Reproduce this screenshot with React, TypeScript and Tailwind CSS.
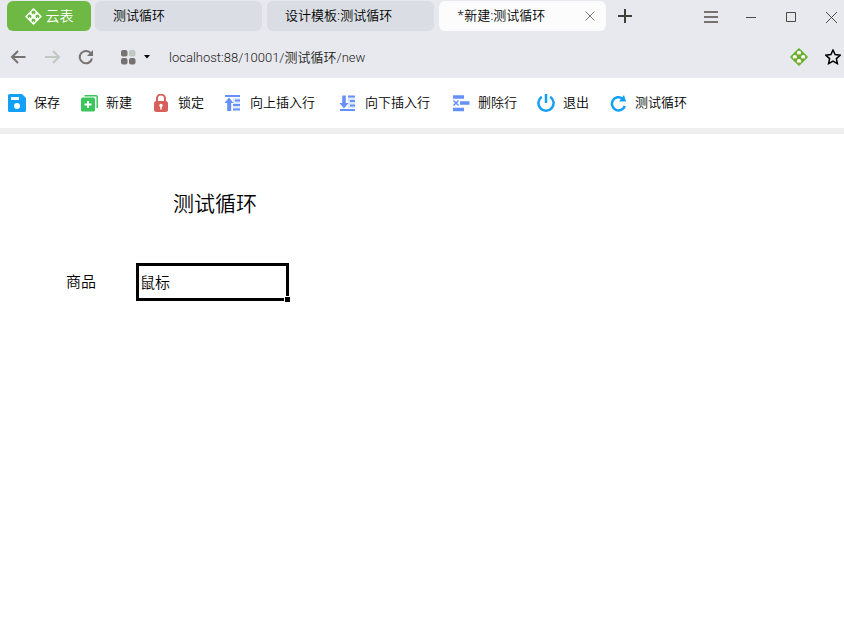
import type { ReactNode } from "react";

type LogoProps = {
  size: number;
  className: string;
  hole: string;
  seed: string;
};

const Logo = ({ size, className, hole, seed }: LogoProps) => (
  <svg width={size} height={size} viewBox="0 0 18 18" className={className} aria-hidden="true">
    <path
      d="M9 1.2 16.8 9 9 16.8 1.2 9Z"
      fill="currentColor"
      stroke="currentColor"
      strokeWidth="1.8"
      strokeLinejoin="round"
    />
    <g fill={hole}>
      <circle cx="9" cy="4.8" r="2.1" />
      <circle cx="9" cy="13.2" r="2.1" />
      <circle cx="4.8" cy="9" r="2.1" />
      <circle cx="13.2" cy="9" r="2.1" />
    </g>
    <g fill={seed}>
      <path d="M8.4 5.8h1.2V7H8.400ZM8.400 14h1.200v1.200H8.400ZM4.200 9.800h1.200V11H4.200ZM12.600 9.800h1.200V11h-1.200Z" />
    </g>
  </svg>
);

const SaveIcon = () => (
  <svg width="18" height="18" viewBox="0 0 18 18" aria-hidden="true">
    <path
      fillRule="evenodd"
      fill="#12a0f8"
      d="M1.5 0H14l4 4v12.5a1.5 1.5 0 0 1-1.5 1.5h-15A1.5 1.5 0 0 1 0 16.5v-15A1.5 1.5 0 0 1 1.5 0ZM3 3v3h8V3ZM9 9a3 3 0 1 0 0 6 3 3 0 0 0 0-6Z"
    />
  </svg>
);

const NewIcon = () => (
  <svg width="18" height="18" viewBox="0 0 18 18" aria-hidden="true">
    <path d="M4.5 1.8h11.700a1 1 0 0 1 1 1V14" fill="none" stroke="#3cc55c" strokeWidth="1.5" />
    <rect x="1" y="3.5" width="14" height="14" rx="1.5" fill="#3cc55c" />
    <path d="M8 7v7M4.5 10.5h7" stroke="#fff" strokeWidth="1.8" />
  </svg>
);

const LockIcon = () => (
  <svg width="18" height="18" viewBox="0 0 18 18" aria-hidden="true">
    <path d="M5 8V4.5a4 4 0 0 1 8 0V8" fill="none" stroke="#d8605c" strokeWidth="2" />
    <rect x="2" y="7" width="14" height="11" rx="2.5" fill="#d8605c" />
    <circle cx="9" cy="11.5" r="1.7" fill="#fff" />
    <path d="M9 11v4.5" stroke="#fff" strokeWidth="1.4" />
  </svg>
);

const InsertAboveIcon = () => (
  <svg width="18" height="18" viewBox="0 0 18 18" aria-hidden="true">
    <path d="M9 4h7v12H9Z" fill="#dbe8ff" />
    <path d="M1 2h15M11 6.5h5M9 11h7M9 15.5h7" stroke="#6690fa" strokeWidth="2" />
    <path d="M5 3.5 9.5 9H7.2v8H3.2V9H.5Z" fill="#6690fa" />
  </svg>
);

const InsertBelowIcon = () => (
  <svg width="18" height="18" viewBox="0 0 18 18" aria-hidden="true">
    <path d="M9 2h7v12H9Z" fill="#dbe8ff" />
    <path d="M9 2.5h7M11 7h5M11 11.5h5M1 16h15" stroke="#6690fa" strokeWidth="2" />
    <path d="M5 14.500.5 9h2.700V1.500h3.600V9h2.700Z" fill="#6690fa" />
  </svg>
);

const DeleteRowIcon = () => (
  <svg width="18" height="18" viewBox="0 0 18 18" aria-hidden="true">
    <path d="M1 3h11M8 9h9.5M1 15.5h11" stroke="#6690fa" strokeWidth="3.5" />
    <path d="M1.5 6.5l5 5M6.5 6.5l-5 5" stroke="#6690fa" strokeWidth="1.5" />
  </svg>
);

const PowerIcon = () => (
  <svg width="18" height="18" viewBox="0 0 18 18" aria-hidden="true">
    <path d="M4.8 2.8a7.600 7.600 0 1 0 8.400 0M9 0v9" fill="none" stroke="#129ff5" strokeWidth="2.5" />
  </svg>
);

const LoopIcon = () => (
  <svg width="18" height="18" viewBox="0 0 18 18" aria-hidden="true">
    <path d="M13.5 4.5A6.6 6.6 0 1 0 15.8 12" fill="none" stroke="#129ff5" strokeWidth="2.5" />
    <path d="M15 1 17 7.500H10Z" fill="#129ff5" />
  </svg>
);

const tools: { label: string; icon: ReactNode; spacing: string }[] = [
  { label: "保存", icon: <SaveIcon />, spacing: "mr-5" },
  { label: "新建", icon: <NewIcon />, spacing: "mr-5" },
  { label: "锁定", icon: <LockIcon />, spacing: "mr-5" },
  { label: "向上插入行", icon: <InsertAboveIcon />, spacing: "mr-6" },
  { label: "向下插入行", icon: <InsertBelowIcon />, spacing: "mr-[22px]" },
  { label: "删除行", icon: <DeleteRowIcon />, spacing: "mr-5" },
  { label: "退出", icon: <PowerIcon />, spacing: "mr-5" },
  { label: "测试循环", icon: <LoopIcon />, spacing: "" },
];

const tabs = [
  { title: "测试循环", active: false },
  { title: "设计模板:测试循环", active: false },
  { title: "*新建:测试循环", active: true },
];

const TabBar = () => (
  <div className="flex h-8 items-center pl-[7px]">
    <button className="mr-1 flex h-[30px] w-[84px] shrink-0 items-center justify-center gap-1 rounded-md bg-[#6eb944] text-sm text-white">
      <Logo size={17} className="text-white" hole="#6eb944" seed="#fff" />
      云表
    </button>
    <div role="tablist" className="flex min-w-0 gap-[5px]">
      {tabs.map((tab) => (
        <div
          key={tab.title}
          className={`flex h-[30px] w-[167px] min-w-0 items-center justify-between rounded-md pl-[18px] pr-[11px] ${
            tab.active ? "bg-[#fcfcfd]" : "bg-[#dadde4]"
          }`}
        >
          <button role="tab" aria-selected={tab.active} className="truncate text-[13px]">
            {tab.title}
          </button>
          {tab.active && (
            <button aria-label="关闭标签">
              <svg width="10" height="10" viewBox="0 0 10 10" stroke="#777" aria-hidden="true">
                <path d="m.5.5 9 9m0-9-9 9" />
              </svg>
            </button>
          )}
        </div>
      ))}
    </div>
    <button aria-label="新标签" className="ml-3">
      <svg width="14" height="14" viewBox="0 0 14 14" stroke="#404038" strokeWidth="2" aria-hidden="true">
        <path d="M7 0v14M0 7h14" />
      </svg>
    </button>
    <div className="ml-auto flex shrink-0 items-center gap-6 pr-[5px] pt-0.5">
      <button aria-label="菜单">
        <svg width="18" height="16" viewBox="0 0 18 16" stroke="#777270" strokeWidth="2" aria-hidden="true">
          <path d="M3 3h14M3 8h14M3 13h14" />
        </svg>
      </button>
      <button aria-label="最小化">
        <svg width="16" height="16" viewBox="0 0 16 16" stroke="#4b4b42" aria-hidden="true">
          <path d="M3 8.5h10" />
        </svg>
      </button>
      <button aria-label="最大化">
        <svg width="16" height="16" viewBox="0 0 16 16" stroke="#4b4b42" fill="none" aria-hidden="true">
          <path d="M3.5 3.5h9v9h-9Z" />
        </svg>
      </button>
      <button aria-label="关闭">
        <svg width="16" height="16" viewBox="0 0 16 16" stroke="#4b4b42" aria-hidden="true">
          <path d="m3 3 11 11m0-11L3 14" />
        </svg>
      </button>
    </div>
  </div>
);

const AddressBar = () => (
  <div className="flex h-[46px] items-center pl-[10px] pt-1">
    <button aria-label="后退" className="mr-[18px]">
      <svg width="16" height="16" viewBox="0 0 16 16" fill="none" stroke="#77716f" strokeWidth="2" aria-hidden="true">
        <path d="M15.5 8H2M8 2 2 8l6 6" />
      </svg>
    </button>
    <button aria-label="前进" className="mr-[18px]">
      <svg width="16" height="16" viewBox="0 0 16 16" fill="none" stroke="#c1c8c2" strokeWidth="2" aria-hidden="true">
        <path d="M1 8h14M9 2l6 6-6 6" />
      </svg>
    </button>
    <button aria-label="刷新" className="mr-[26px]">
      <svg width="16" height="16" viewBox="0 0 16 16" fill="none" aria-hidden="true">
        <path d="M13 4.5A6.2 6.2 0 1 0 14 9.5" stroke="#77716f" strokeWidth="2" />
        <path d="M15 1v6H9Z" fill="#77716f" />
      </svg>
    </button>
    <button aria-label="应用" className="mr-[19px] flex items-center gap-2">
      <svg width="16" height="16" viewBox="0 0 16 16" fill="#77716f" aria-hidden="true">
        <rect x="1" y="1" width="6.5" height="6.5" rx="2" />
        <rect x="9" y="1" width="6.5" height="6.5" rx="2" fill="#c1c8c2" />
        <rect x="1" y="9" width="6.5" height="6.5" rx="2" />
        <rect x="9" y="9" width="6.5" height="6.5" rx="2" />
      </svg>
      <svg width="6" height="4" viewBox="0 0 6 4" aria-hidden="true">
        <path d="M0 0h6L3 3.5Z" />
      </svg>
    </button>
    <input
      aria-label="地址"
      defaultValue="localhost:88/10001/测试循环/new"
      className="h-6 min-w-0 flex-1 bg-transparent pb-0.5 font-[Roboto,'Noto_Sans_CJK_SC',sans-serif] text-[13px] text-[#222] outline-none"
    />
    <button aria-label="云表" className="mr-[17px]">
      <Logo size={18} className="text-[#68b030]" hole="#fff" seed="#f0863a" />
    </button>
    <button aria-label="收藏" className="mr-[3px]">
      <svg width="16" height="16" viewBox="0 0 16 16" fill="none" stroke="#000" strokeWidth="1.5" aria-hidden="true">
        <path d="m8 1 2.1 4.6 5 .6-3.7 3.4 1 5L8 12.1l-4.4 2.5 1-5L.9 6.2l5-.6Z" />
      </svg>
    </button>
  </div>
);

const Toolbar = () => (
  <div className="flex h-14 items-center border-b-6 border-[#efefef] bg-white pl-2">
    {tools.map(({ label, icon, spacing }) => (
      <button key={label} className={`flex shrink-0 items-center gap-2 text-[13px] ${spacing}`}>
        {icon}
        {label}
      </button>
    ))}
  </div>
);

export default function App() {
  return (
    <div className="min-h-screen bg-white font-['Noto_Sans','Noto_Sans_CJK_SC',sans-serif] font-[350] text-black">
      <header className="bg-[#e8e9ee]">
        <TabBar />
        <AddressBar />
      </header>
      <Toolbar />
      <main className="pl-[66px] pt-[53px]">
        <h1 className="ml-[107px] text-[21px] font-[350] leading-8">测试循环</h1>
        <div className="mt-11 flex items-center">
          <label htmlFor="product" className="w-[70px] pb-0.5 text-[15px]">
            商品
          </label>
          <div className="relative">
            <input
              id="product"
              defaultValue="鼠标"
              className="block h-[38px] w-[153px] border-3 border-black px-px pb-0.5 text-[15px] outline-none"
            />
            <span className="absolute -bottom-px -right-px size-1.5 border-l border-t border-white bg-black" />
          </div>
        </div>
      </main>
    </div>
  );
}
